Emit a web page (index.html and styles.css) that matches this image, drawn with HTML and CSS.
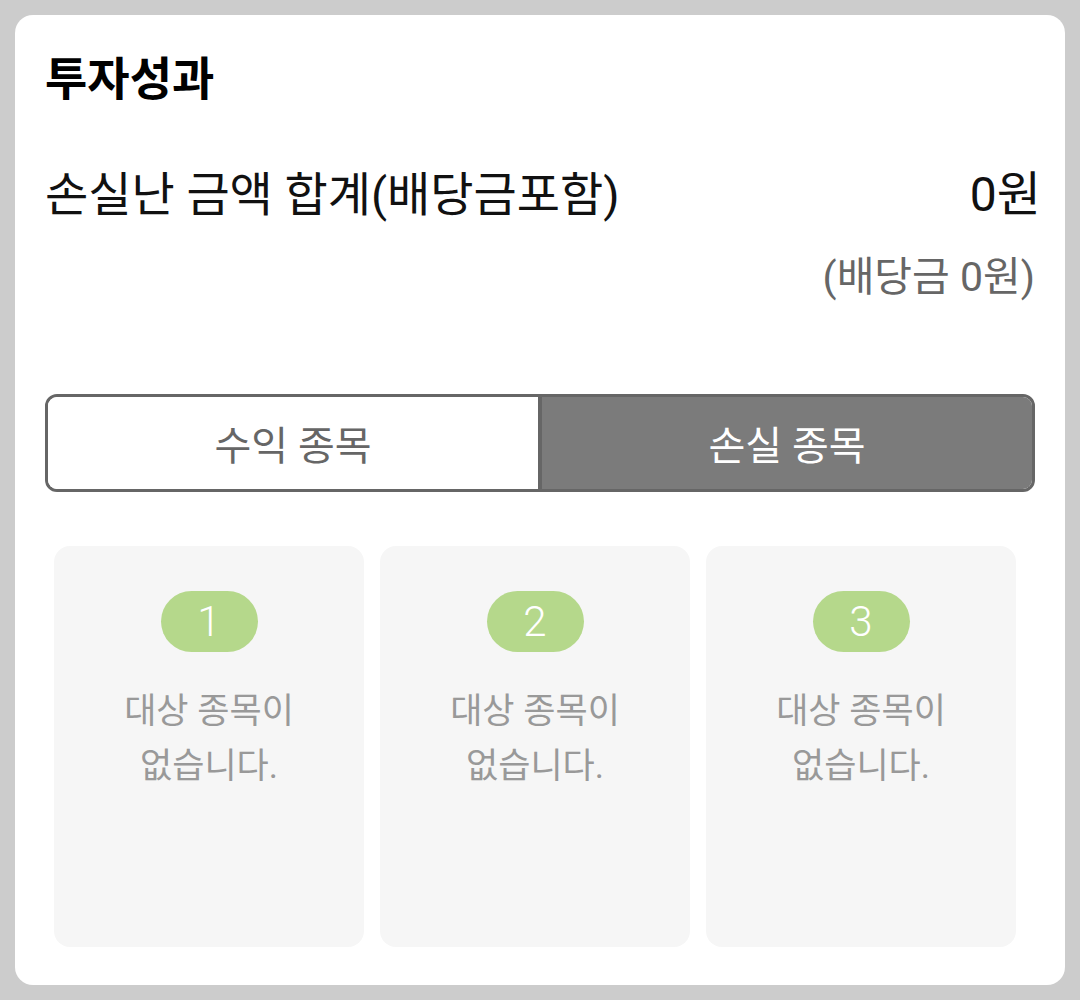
FILE: index.html
```html
<!DOCTYPE html>
<html lang="ko">
<head>
<meta charset="utf-8">
<title>투자성과</title>
<link rel="stylesheet" href="styles.css">
</head>
<body>
<section class="panel">
  <h1 class="title">투자성과</h1>
  <div class="sum-row">
    <span class="sum-label">손실난 금액 합계(배당금포함)</span>
    <span class="sum-value">0원</span>
  </div>
  <div class="sum-sub">(배당금 0원)</div>
  <div class="tabs">
    <div class="tab">수익 종목</div>
    <div class="tab tab-active">손실 종목</div>
  </div>
  <div class="cards">
    <div class="card">
      <div class="badge">1</div>
      <p class="empty">대상 종목이<br>없습니다.</p>
    </div>
    <div class="card">
      <div class="badge">2</div>
      <p class="empty">대상 종목이<br>없습니다.</p>
    </div>
    <div class="card">
      <div class="badge">3</div>
      <p class="empty">대상 종목이<br>없습니다.</p>
    </div>
  </div>
</section>
</body>
</html>
```

FILE: styles.css
```css
html, body {
  margin: 0;
  padding: 0;
}
body {
  background: #cccccc;
  padding: 15px;
  font-family: Roboto, "Noto Sans CJK KR", sans-serif;
}
.panel {
  background: #ffffff;
  border-radius: 18px;
  height: 970px;
  box-sizing: border-box;
  padding: 36px 30px 0 30px;
}
.title {
  margin: 0;
  font-size: 46px;
  font-weight: 700;
  line-height: 56px;
  color: #000;
}
.sum-row {
  display: flex;
  justify-content: space-between;
  align-items: center;
  margin-top: 61px;
  height: 54px;
}
.sum-label {
  font-size: 47px;
  color: #111;
  line-height: 54px;
}
.sum-value {
  font-size: 48px;
  color: #111;
  line-height: 54px;
  margin-right: -6px;
}
.sum-sub {
  text-align: right;
  font-size: 41px;
  color: #666;
  line-height: 50px;
  margin-top: 30px;
}
.tabs {
  display: flex;
  margin-top: 92px;
  height: 98px;
  box-sizing: border-box;
  border: 3px solid #666;
  border-radius: 12px;
  overflow: hidden;
}
.tab {
  flex: 1;
  display: flex;
  align-items: center;
  justify-content: center;
  font-size: 40px;
  color: #666;
  background: #fff;
}
.tab-active {
  background: #7b7b7b;
  color: #fff;
  border-left: 4px solid #666;
}
.cards {
  display: flex;
  gap: 16px;
  margin-top: 54px;
  margin-left: 9px;
}
.card {
  width: 310px;
  height: 401px;
  background: #f6f6f6;
  border-radius: 16px;
  display: flex;
  flex-direction: column;
  align-items: center;
  padding-top: 45px;
  box-sizing: border-box;
}
.badge {
  width: 97px;
  height: 61px;
  border-radius: 31px;
  background: #b5d88b;
  color: #fff;
  font-size: 42px;
  font-weight: 300;
  display: flex;
  align-items: center;
  justify-content: center;
}
.empty {
  margin: 32px 0 0 0;
  text-align: center;
  font-size: 35px;
  line-height: 55px;
  color: #999;
}
```
